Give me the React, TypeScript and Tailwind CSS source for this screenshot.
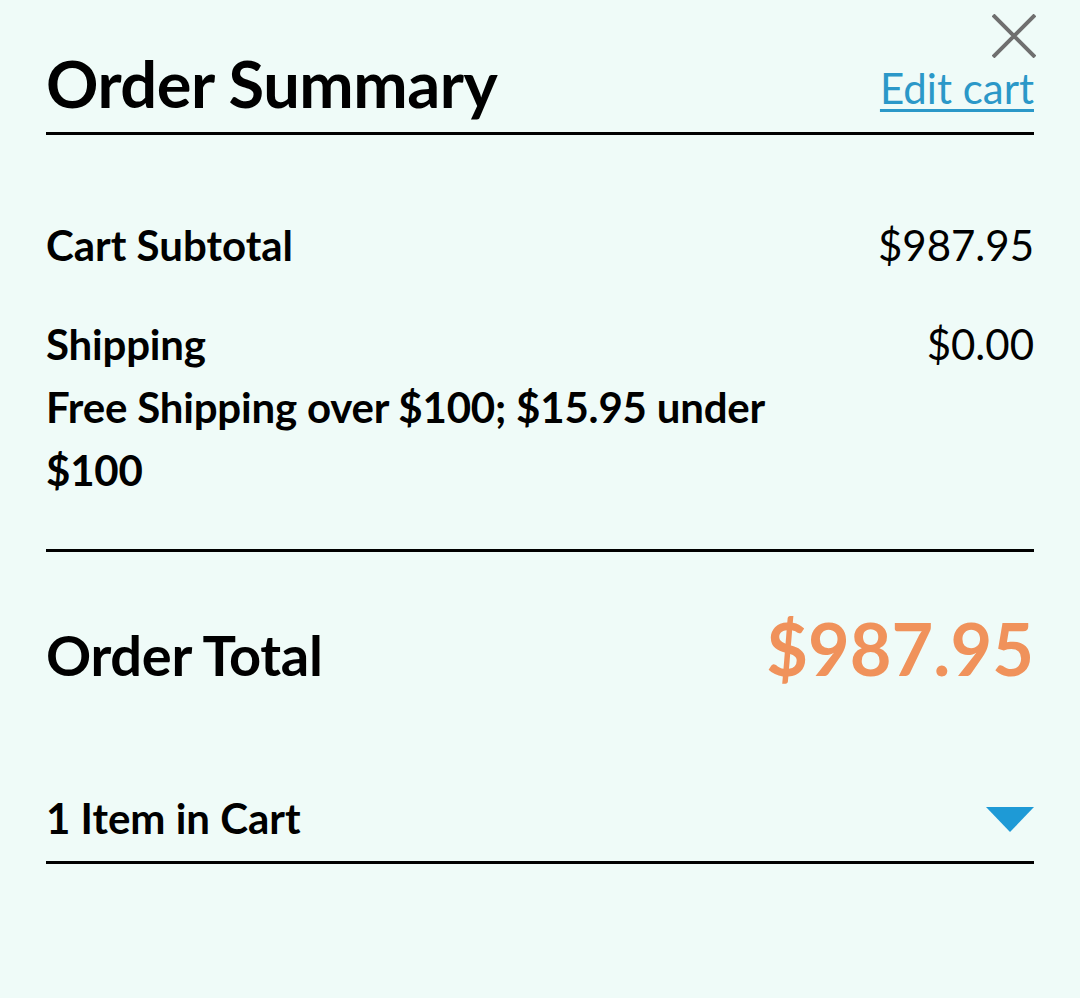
import React from "react";

const lines = [
  { label: "Cart Subtotal", value: "$987.95" },
];

export default function App() {
  return (
    <div className="min-h-[998px] w-full bg-[#effbf8] font-['Lato','Liberation_Sans',sans-serif] text-black">
      <div className="relative px-[46px]">
        {/* close button */}
        <button
          type="button"
          className="absolute right-[44px] top-[14px] h-[44px] w-[44px] text-[#6f6f6f]"
          aria-label="Close"
        >
          <svg viewBox="0 0 44 44" className="h-full w-full" fill="none" stroke="currentColor" strokeWidth="4">
            <path d="M1 1L43 43M43 1L1 43" />
          </svg>
        </button>

        {/* header */}
        <div className="flex items-end justify-between border-b-[3px] border-black pt-[47px] pb-[13px]">
          <h1 className="text-[65px] font-bold leading-[72px] tracking-[-0.5px]">Order Summary</h1>
          <a href="#" className="mb-[7px] text-[42px] leading-[48px] text-[#2b98c8] underline decoration-[3px] underline-offset-[5px]">
            Edit cart
          </a>
        </div>

        {/* totals */}
        <div className="border-b-[3px] border-black pt-[79px] pb-[47px]">
          {lines.map((l) => (
            <div key={l.label} className="flex justify-between text-[42px] leading-[63px]">
              <span className="font-bold">{l.label}</span>
              <span>{l.value}</span>
            </div>
          ))}
          <div className="mt-[36px] flex justify-between text-[42px] leading-[63px]">
            <div className="max-w-[760px] font-bold tracking-[-0.2px]">
              <div>Shipping</div>
              <div>Free Shipping over $100; $15.95 under $100</div>
            </div>
            <span>$0.00</span>
          </div>
        </div>

        <div className="flex items-baseline justify-between pt-[56px]">
          <span className="text-[56px] font-bold leading-[80px] tracking-[-0.3px]">Order Total</span>
          <span className="text-[72px] font-bold leading-[80px] text-[#f0925b]">$987.95</span>
        </div>

        {/* cart items toggle */}
        <div className="flex items-center justify-between border-b-[3px] border-black pt-[98px] pb-[18px]">
          <span className="text-[42px] font-bold leading-[50px]">1 Item in Cart</span>
          <svg viewBox="0 0 48 25" className="mt-[3px] h-[25px] w-[48px]">
            <path d="M0 0H48L24 25Z" fill="#1e9ad6" />
          </svg>
        </div>
      </div>
    </div>
  );
}
